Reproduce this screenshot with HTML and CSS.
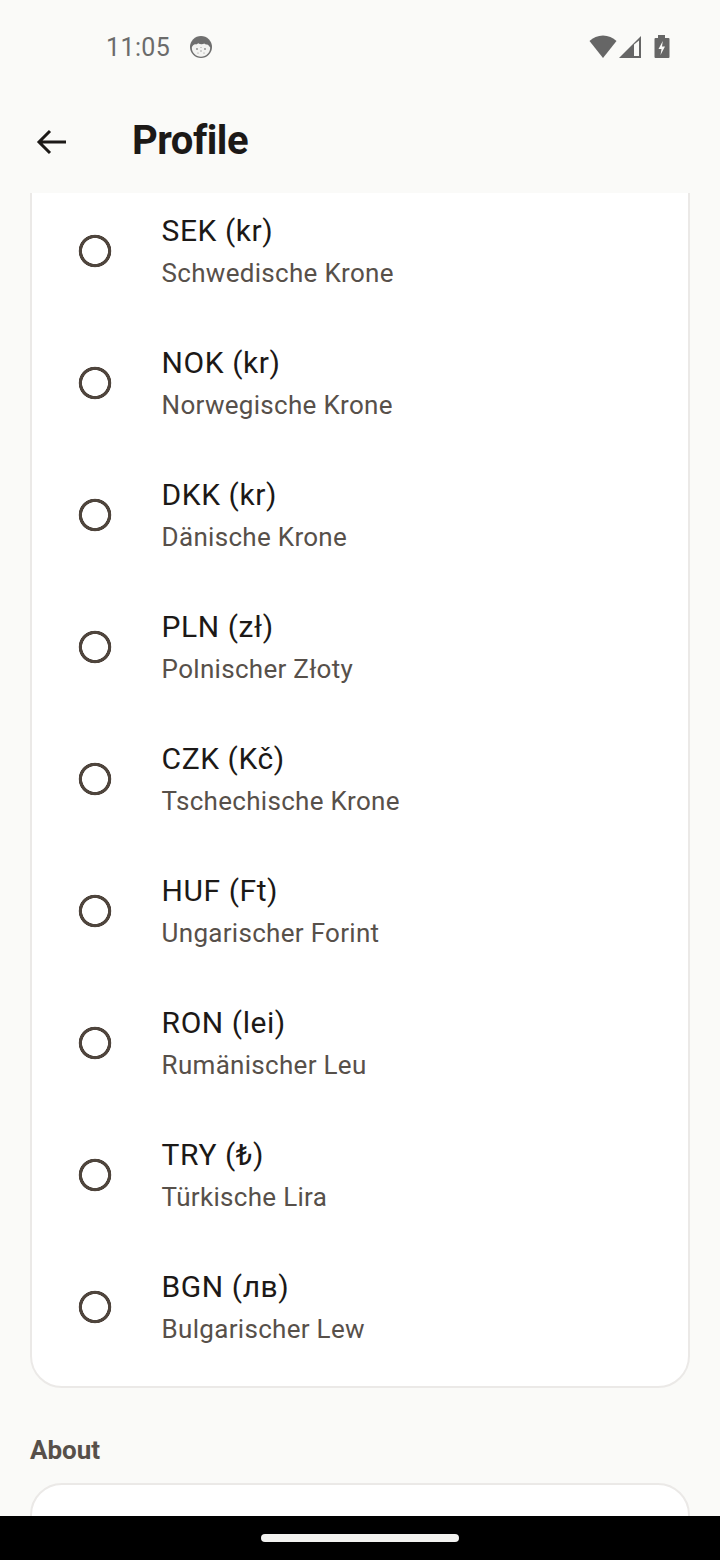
FILE: index.html
```html
<!DOCTYPE html>
<html lang="de">
<head>
<meta charset="utf-8">
<title>Profile</title>
<link rel="stylesheet" href="styles.css">
</head>
<body>
<div class="app">
  <div class="status">
    <div class="status-left">
      <span class="time">11:05</span>
      <svg class="face" width="24" height="24" viewBox="0 0 24 24"><circle cx="12" cy="12" r="11" fill="#6f6f6f"/><path d="M2.800 12.500c.6-1.800 2-3 3.400-3.200 1 .4 2.200 0 3-1 1.600 1 4.600 1.200 6 .2 1 .9 2.200 1.300 3 .9 1.200.6 2.400 1.800 3 3.100 0 5.200-4.200 9.200-9.200 9.200s-9.200-4-9.200-9.200z" fill="#f4f4f2"/><g fill="#8a8a8a"><circle cx="8" cy="14" r=".9"/><circle cx="16" cy="14" r=".9"/><circle cx="12" cy="16" r=".7"/><circle cx="9" cy="18" r=".6"/><circle cx="15" cy="18" r=".6"/><circle cx="12" cy="12.500" r=".5"/></g></svg>
    </div>
    <div class="status-right">
      <svg width="28" height="24" viewBox="0 0 28 24"><path d="M0.500 6C4 2.600 8.800.5 14 .5S24 2.600 27.500 6L14 23z" fill="#666"/></svg>
      <svg width="24" height="24" viewBox="0 0 24 24"><path d="M1 23 23 1v22z" fill="#666"/><path d="M16 9.500 21 5.500V21h-5z" fill="#fafaf8"/></svg>
      <svg class="battery" width="16" height="24" viewBox="0 0 16 24"><path d="M4 0h7v3h3.500a1 1 0 0 1 1 1V22a1 1 0 0 1-1 1H1.500a1 1 0 0 1-1-1V4a1 1 0 0 1 1-1H4z" fill="#666"/><path d="M8.800 6 4.500 14h3l-1 6 4.500-8.500H8z" fill="#fafaf8"/></svg>
    </div>
  </div>
  <header class="bar">
    <svg class="back" width="32" height="32" viewBox="0 0 32 32"><path d="M31 16H4M15 5 4 16l11 11" fill="none" stroke="#1c1917" stroke-width="3"/></svg>
    <h1 class="title">Profile</h1>
  </header>
  <main class="scroll">
    <div class="card first">
      <div class="row"><span class="radio"></span><div class="text"><div class="code">SEK (kr)</div><div class="name">Schwedische Krone</div></div></div>
      <div class="row"><span class="radio"></span><div class="text"><div class="code">NOK (kr)</div><div class="name">Norwegische Krone</div></div></div>
      <div class="row"><span class="radio"></span><div class="text"><div class="code">DKK (kr)</div><div class="name">Dänische Krone</div></div></div>
      <div class="row"><span class="radio"></span><div class="text"><div class="code">PLN (zł)</div><div class="name">Polnischer Złoty</div></div></div>
      <div class="row"><span class="radio"></span><div class="text"><div class="code">CZK (Kč)</div><div class="name">Tschechische Krone</div></div></div>
      <div class="row"><span class="radio"></span><div class="text"><div class="code">HUF (Ft)</div><div class="name">Ungarischer Forint</div></div></div>
      <div class="row"><span class="radio"></span><div class="text"><div class="code">RON (lei)</div><div class="name">Rumänischer Leu</div></div></div>
      <div class="row"><span class="radio"></span><div class="text"><div class="code">TRY (₺)</div><div class="name">Türkische Lira</div></div></div>
      <div class="row"><span class="radio"></span><div class="text"><div class="code">BGN (лв)</div><div class="name">Bulgarischer Lew</div></div></div>
    </div>
    <h2 class="section">About</h2>
    <div class="card second"></div>
  </main>
  <div class="nav"><span class="pill"></span></div>
</div>
</body>
</html>
```
FILE: styles.css
```css
* { box-sizing: border-box; }
html, body { margin: 0; padding: 0; }
body { background: #fafaf8; font-family: Roboto, "Noto Sans", sans-serif; }
.app { width: 720px; height: 1560px; display: flex; flex-direction: column; overflow: hidden; }
.status { height: 96px; flex: none; display: flex; justify-content: space-between; align-items: flex-start; padding: 35px 50px 0 106px; }
.status-left { display: flex; align-items: center; gap: 19px; height: 24px; }
.time { font-size: 25px; color: #6b6b6b; letter-spacing: .4px; line-height: 26px; padding-top: 2px; }
.status-right { display: flex; align-items: flex-start; gap: 1px; height: 24px; }
.battery { margin-left: 11px; }
.bar { height: 97px; flex: none; display: flex; align-items: center; padding: 0 0 8px 35px; }
.back { flex: none; margin-top: 3px; }
.title { margin: 0 0 0 65px; font-size: 40px; font-weight: 700; line-height: 48px; letter-spacing: -.5px; color: #1c1917; font-family: Roboto, sans-serif; }
.scroll { flex: 1; min-height: 0; overflow: hidden; }
.card { margin: 0 30px; background: #fff; border: 2px solid #ebe9e7; border-radius: 32px; }
.first { margin-top: -44px; padding: 33px 0 14px; }
.row { height: 132px; display: flex; align-items: center; padding-left: 46px; }
.radio { width: 34px; height: 34px; margin-top: 1px; flex: none; border-radius: 50%; background: radial-gradient(circle closest-side, transparent 12.6px, #4f453d 13.2px, #4f453d 16px, transparent 16.6px); }
.text { margin-left: 49.6px; padding-top: 3px; }
.code { font-size: 30px; line-height: 40px; color: #1c1917; letter-spacing: .56px; }
.name { font-size: 26px; line-height: 40px; margin-top: 2px; color: #57504a; letter-spacing: .3px; }
.section { margin: 45px 30px 16px; font-size: 26px; font-weight: 700; line-height: 34px; color: #57504a; }
.second { height: 200px; }
.nav { height: 44px; flex: none; background: #000; display: flex; justify-content: center; padding-top: 18px; }
.pill { width: 198px; height: 8px; border-radius: 4px; background: #f2f2f0; }
```
